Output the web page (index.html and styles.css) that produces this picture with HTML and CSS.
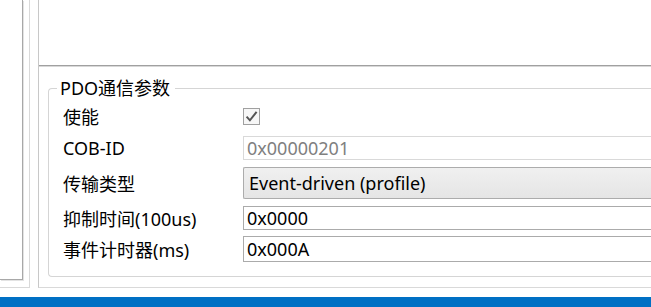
FILE: index.html
```html
<!DOCTYPE html>
<html>
<head>
<meta charset="utf-8">
<link rel="stylesheet" href="styles.css">
</head>
<body>
<div class="app">
  <div class="main">
    <div class="panel-a">
      <div class="panel-a-inner"></div>
    </div>
    <div class="panel-b">
      <div class="top-pane"></div>
      <div class="bottom-pane">
        <div class="group">
          <div class="group-title">PDO通信参数</div>
          <div class="form">
            <div class="label">使能</div>
            <div class="ctl"><span class="checkbox"><svg viewBox="0 0 17 17" width="17" height="17"><path d="M3.6 8.6 L6.9 12.3 L13.6 3.9" fill="none" stroke="#555555" stroke-width="2"/></svg></span></div>
            <div class="label">COB-ID</div>
            <div class="ctl"><div class="input disabled">0x00000201</div></div>
            <div class="label">传输类型</div>
            <div class="ctl"><div class="combo">Event-driven (profile)</div></div>
            <div class="label">抑制时间(100us)</div>
            <div class="ctl"><div class="input">0x0000</div></div>
            <div class="label">事件计时器(ms)</div>
            <div class="ctl"><div class="input tall">0x000A</div></div>
          </div>
        </div>
      </div>
    </div>
  </div>
  <div class="statusbar"></div>
</div>
</body>
</html>
```

FILE: styles.css
```css
html, body {
  margin: 0;
  padding: 0;
  background: #ffffff;
  overflow: hidden;
}
body {
  width: 651px;
  height: 307px;
  font-family: "Noto Sans", "Noto Sans CJK SC", sans-serif;
  font-size: 18px;
  color: #000000;
}
.app {
  display: flex;
  flex-direction: column;
  height: 307px;
}
.main {
  display: flex;
  height: 297px;
  flex: none;
}
.panel-a {
  flex: none;
  width: 30px;
  height: 288px;
  box-sizing: border-box;
  border-right: 1px solid #d9d9d9;
  border-bottom: 1px solid #d9d9d9;
}
.panel-a-inner {
  width: 23px;
  height: 280px;
  box-sizing: border-box;
  border-right: 1px solid #a8a8a8;
  border-bottom: 1px solid #a8a8a8;
  box-shadow: 1px 1px 0 #e3e3e3;
}
.panel-b {
  margin-left: 8px;
  flex: 1;
  min-width: 0;
  height: 288px;
  box-sizing: border-box;
  border-left: 1px solid #c8c8c8;
  border-bottom: 1px solid #d9d9d9;
  display: flex;
  flex-direction: column;
}
.top-pane {
  height: 65px;
  border-bottom: 1px solid #a0a0a0;
  box-shadow: 0 1px 0 #d8d8d8;
  flex: none;
}
.bottom-pane {
  flex: 1;
  padding-top: 22px;
  padding-left: 9px;
}
.group {
  position: relative;
  height: 189px;
  box-sizing: border-box;
  border: 1px solid #d5d5d5;
  border-right: none;
  border-radius: 4px 0 0 4px;
  padding-top: 12px;
}
.group-title {
  position: absolute;
  left: 8px;
  top: -13px;
  padding: 0 5px 0 3px;
  background: #ffffff;
  line-height: 24px;
  font-size: 18px;
}
.form {
  display: grid;
  grid-template-columns: 180px 1fr;
  grid-template-rows: 30px 33px 38px 31px 31px;
}
.label {
  display: flex;
  align-items: center;
  padding-left: 14px;
  white-space: nowrap;
}
.ctl {
  display: flex;
  align-items: center;
  margin-left: 14px;
  min-width: 0;
}
.checkbox {
  display: block;
  width: 17px;
  height: 17px;
  box-sizing: border-box;
  border: 1px solid #a0a0a0;
  background: #f7f7f7;
  position: relative;
}
.checkbox svg {
  position: absolute;
  left: -1px;
  top: -1px;
}
.input {
  width: 100%;
  height: 24px;
  box-sizing: border-box;
  border: 1px solid #ababab;
  border-right: none;
  background: #ffffff;
  padding-left: 3px;
  display: flex;
  align-items: center;
}
.input.tall {
  height: 26px;
}
.input.disabled {
  border-color: #d9d9d9;
  color: #808080;
}
.combo {
  width: 100%;
  height: 32px;
  box-sizing: border-box;
  border: 1px solid #acacac;
  border-right: none;
  border-radius: 2px 0 0 2px;
  background: linear-gradient(#f0f0f0, #e5e5e5);
  padding-left: 5px;
  display: flex;
  align-items: center;
}
.statusbar {
  height: 10px;
  background: #0070c4;
  flex: none;
}
```
